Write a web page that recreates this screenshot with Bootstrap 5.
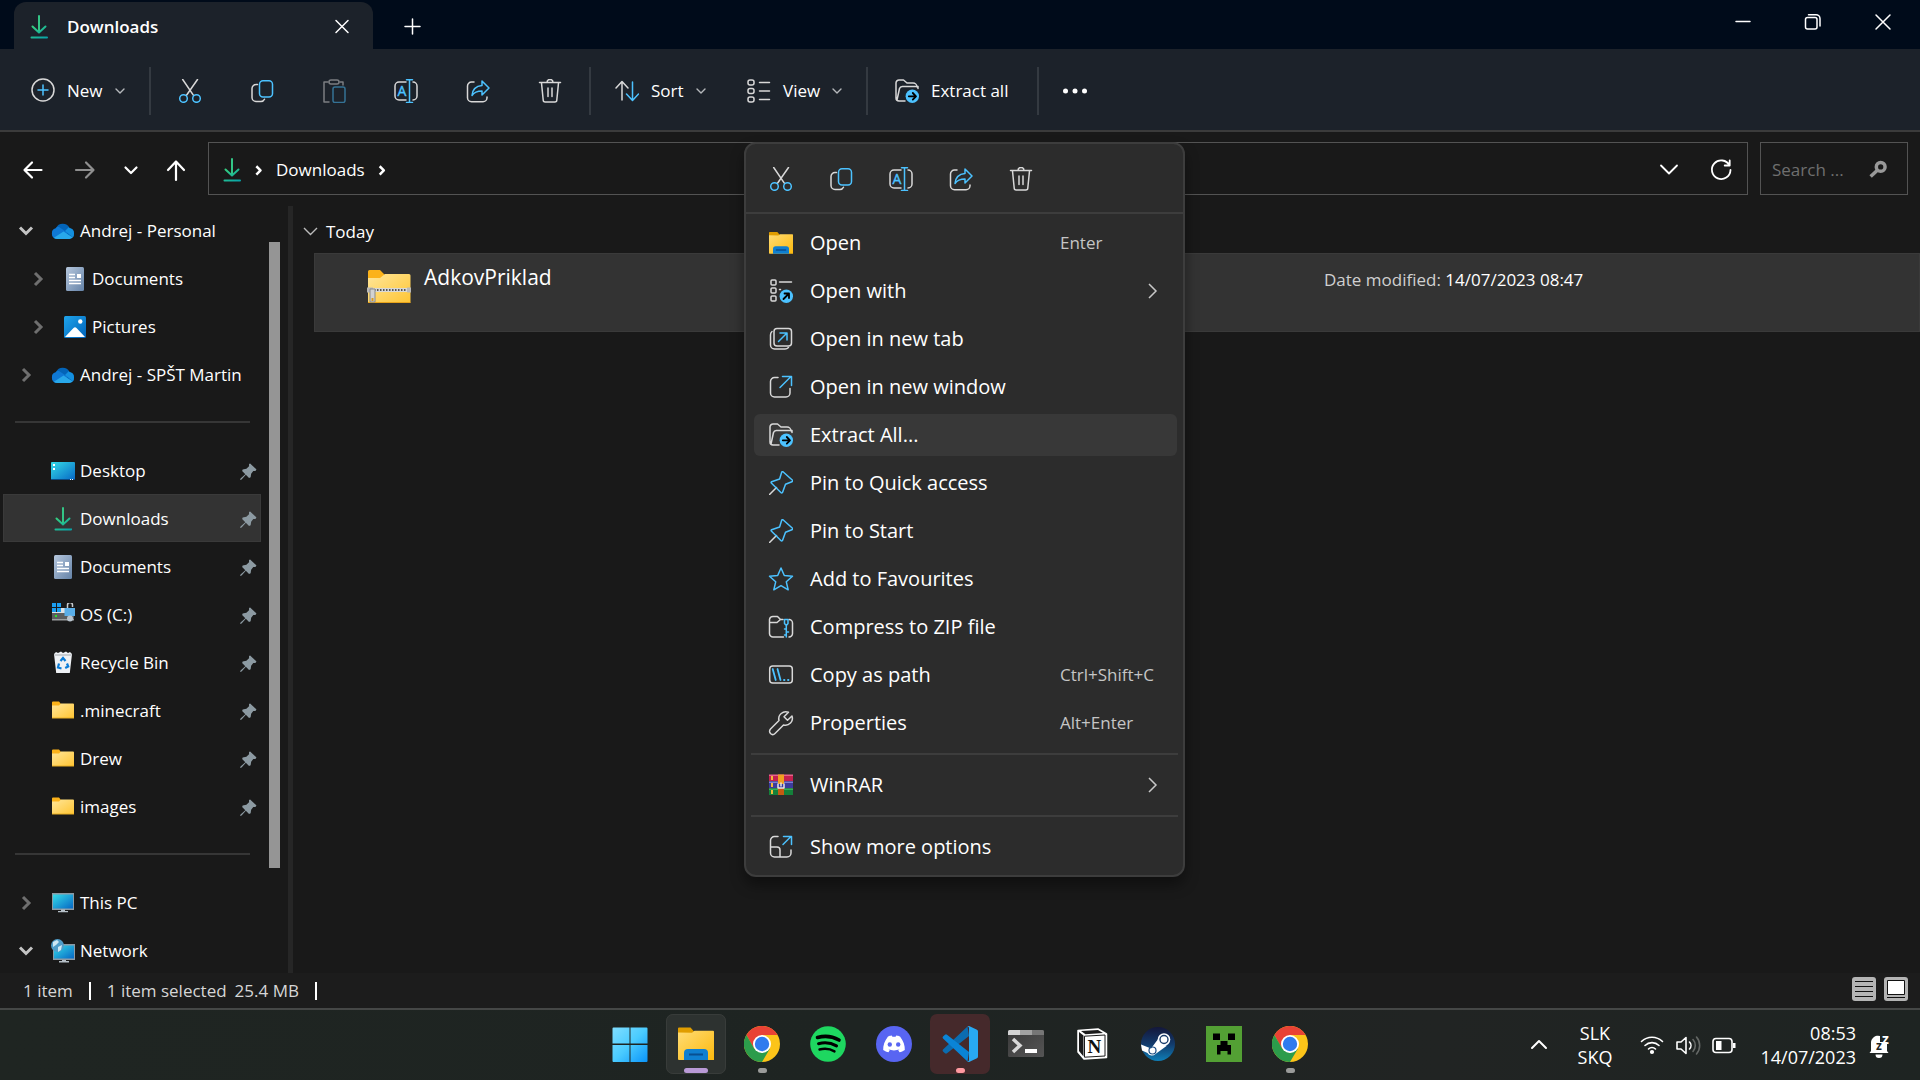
<!DOCTYPE html>
<html lang="en" data-bs-theme="dark">
<head>
<meta charset="utf-8">
<meta name="viewport" content="width=device-width, initial-scale=1">
<title>Downloads</title>
<link href="https://cdn.jsdelivr.net/npm/bootstrap@5.3.0/dist/css/bootstrap.min.css" rel="stylesheet">
<style>
:root{--acc:#4cc2ff;--ln:#d8d8d8}
body{font-family:"Open Sans","Noto Sans",sans-serif;font-size:17px;line-height:24px;background:#191919;color:#fff;overflow:hidden}
svg{flex:none;display:block;overflow:visible}
a{color:inherit;text-decoration:none}
.ic{width:24px;height:24px;fill:none;stroke:var(--ln);stroke-width:1.5;stroke-linecap:round;stroke-linejoin:round}
.bl{stroke:var(--acc)}
.plain{background:none;border:0;padding:0;color:inherit;display:flex;align-items:center}
.plain:hover{background:#ffffff10}
.titlebar{background:#000b1a;height:49px;padding-left:14px}
.tab-item{background:#1c222a;width:359px;margin-top:2px;border-radius:12px 12px 0 0;padding:2px 19px 0 13px;font-weight:600}
.tab-item .ic,.newtab .ic{stroke:#fff}
.newtab{width:48px;justify-content:center;margin-left:15px;padding-top:2px}
.winctl{padding-right:2px}
.winbtn{width:70px;height:43px;justify-content:center}
.winbtn .ic{stroke:#fff}
.toolbar{background:#1c222a;height:83px;border-bottom:2px solid #3b3b3b;padding-top:2px}
.toolbar .plain{height:60px}
.iconbtn{width:72px;justify-content:center}
.cmd{padding-left:24px!important;gap:12px}
.cmd-new{width:149px;padding-left:31px!important}
.cmd-sort{width:132px}.cmd-view{width:143px}.cmd-extract{width:166px}
.tsep{width:2px;height:48px;background:#343a41}
.tsep-after{margin-right:3px}
.tsep-before{margin-left:3px}
.chev{width:10px;height:10px;fill:none;stroke:#b5b8bb;stroke-width:1.4;stroke-linecap:round;stroke-linejoin:round}
.addressbar{height:74px;padding:10px 12px 11px 9px}
.navbtn{width:48px;justify-content:center;padding-top:2px}
.navbtn .ic{stroke:#fff;stroke-width:2.2}
.navbtn .ic.thin{stroke-width:1.8}
.navbtn:disabled .ic{stroke:#8f8f8f}
.navbtn-narrow{width:43px}
.addrbox{border:1px solid #535353;margin-left:8px;margin-right:12px;padding:0 2px 0 11px}
.addrbox>svg,.addrbox>a{margin-top:2px}
.crumb{width:20px;stroke:#fff;stroke-width:3;stroke-linecap:butt}
.searchbox{border:1px solid #535353;width:148px;padding:2px 18px 0 11px}
.searchbox input{background:none;border:0;outline:0;width:90px;color:#fff;padding:0}
.searchbox input::placeholder{color:#6f6f6f;opacity:1}
.side{width:294px}
.tree{width:261px;padding-left:3px}
.tree a{height:48px;display:flex;align-items:center;padding:2px 0 0 12px;white-space:nowrap}
.tree a.sel{background:#333;outline:1px solid #3a3a3a;outline-offset:-1px}
.tree a:hover{background:#2a2a2a}
.tree .tw{width:22px;height:22px;fill:none;stroke:#6f6f6f;stroke-width:3;margin-right:14px}
.tree .tw.open{stroke:#c4c4c4}
.tree a.child{padding-left:24px}
.tree .pic{width:24px;height:24px;margin-right:5px}
.tree .pin{width:17px;height:17px;margin-left:auto;margin-right:4px}
.tree .rule{height:48px;padding:0 11px 0 12px;display:flex;align-items:center}
.tree .rule hr{width:100%;margin:0;border-top:2px solid #363636;opacity:1}
.sbar{width:11px;height:626px;margin:36px 0 0 8px;background:#959595}
.divider{width:5px;margin-left:8px;background:#262626}
.files{min-width:0}
.group{padding:14px 0 0 10px;height:47px}
.filerow{background:#333;outline:1px solid #3a3a3a;outline-offset:-1px;height:79px;margin-left:20px;padding-left:53px}
.fname{font-size:21px;line-height:28px;padding-top:10px;width:913px;padding-left:13px}
.fdate{padding-top:15px;color:#d0d0d0}
.fdate b{font-weight:400;color:#fff}
.statusbar{background:#1c1c1c;height:37px;border-bottom:2px solid #454746;padding:0 12px 0 23px;color:#d6d6d6}
.vbar{width:2px;height:18px;background:#fff;margin:0 16px}
.taskbar{height:70px;background:linear-gradient(90deg,#1f2522,#1e2422 45%,#212423 75%,#1e2422);display:grid;grid-template-columns:1fr auto 1fr}
.app{width:60px;height:60px;margin:4px 3px 6px;border-radius:7px;justify-content:center;position:relative}
.app svg{width:36px;height:36px}
.app.act{background:#2d3230;outline:1px solid #383c3a;outline-offset:-1px}
.app.alert-red{background:#45292b}
.app .dot{position:absolute;bottom:1px;height:5px;width:9px;border-radius:3px;background:#9a9b9a}
.app.act .dot{width:24px;background:#b99ad6}
.app.alert-red .dot{background:#ff99a0}
.tray{font-size:18px;line-height:24px;padding-right:29px}
.tray .ic{stroke:#fff;stroke-width:2}
.tray .ic.wide{width:28px;stroke-width:1.6}
.lang{margin:0 26px 0 27px}
.clock{margin-left:22px;margin-right:11px}
.ctx{position:absolute;left:744px;top:142px;width:441px;background:#2c2c2c;border:2px solid #3d3d3d;border-radius:12px;box-shadow:0 8px 14px #0006;z-index:10;font-size:20px;padding-bottom:4px}
.ctx-top{height:70px;border-bottom:2px solid #3d3d3d;padding-left:5px;margin-bottom:5px}
.ctx-top .plain{width:60px;justify-content:center;padding-top:2px}
.ctx-item{height:42px;margin:3px 6px 3px 8px;border-radius:6px;padding-left:15px!important;text-align:left}
.ctx-item.hov{background:#383838}
.ctx-item .ic{margin-right:17px}
.ctx-item .lbl{width:250px}
.ctx-item kbd{background:none;padding:0;color:#c5c5c5;font-family:inherit;font-size:17px}
.ctx-sep{margin:6px 5px;border-top:2px solid #3d3d3d;opacity:1}
.ctx-item .more{width:14px;height:16px;margin-left:auto;margin-right:18px;fill:none;stroke:#c8c8c8;stroke-width:1.5}
</style>
<script src="https://cdn.jsdelivr.net/npm/bootstrap@5.3.0/dist/js/bootstrap.bundle.min.js"></script>
</head>
<body class="vh-100 d-flex flex-column">
<svg width="0" height="0" class="position-absolute" aria-hidden="true">
<defs>
<linearGradient id="gdl" x1="0" y1="0" x2="1" y2="1"><stop offset="0" stop-color="#36d080"/><stop offset="1" stop-color="#08a3a8"/></linearGradient>
<linearGradient id="gfo" x1="0" y1="0" x2="1" y2="1"><stop offset="0" stop-color="#ffe69a"/><stop offset="1" stop-color="#ffc533"/></linearGradient>
<linearGradient id="gex" x1="0" y1="0" x2="1" y2="1"><stop offset="0" stop-color="#ffdc75"/><stop offset="1" stop-color="#fcb90d"/></linearGradient>
<linearGradient id="gsc" x1="0" y1="0" x2="1" y2="1"><stop offset="0" stop-color="#35dbe8"/><stop offset="1" stop-color="#0667c4"/></linearGradient>
<linearGradient id="gdo" x1="0" y1="0" x2="1" y2="1"><stop offset="0" stop-color="#b6c7dd"/><stop offset="1" stop-color="#6583a8"/></linearGradient>
<linearGradient id="gpi" x1="0" y1="0" x2="1" y2="1"><stop offset="0" stop-color="#1fa5ec"/><stop offset="1" stop-color="#0062b8"/></linearGradient>
<linearGradient id="gwi" x1="0" y1="0" x2="1" y2="1"><stop offset="0" stop-color="#80deff"/><stop offset=".5" stop-color="#4acbff"/><stop offset="1" stop-color="#0a94fa"/></linearGradient>
<linearGradient id="gst" x1="0" y1="0" x2="0" y2="1"><stop offset="0" stop-color="#14173a"/><stop offset=".5" stop-color="#123a6b"/><stop offset="1" stop-color="#0f7fb8"/></linearGradient>
<linearGradient id="gte" x1="0" y1="0" x2="1" y2="1"><stop offset="0" stop-color="#3a3a3a"/><stop offset="1" stop-color="#555"/></linearGradient>
<clipPath id="ccl"><path d="M6 20a5.500 5.500 0 0 1-1-10.800A7.500 7.500 0 0 1 18.500 9 5.600 5.600 0 0 1 18.500 20z"/></clipPath>
<symbol id="download" viewBox="0 0 24 24"><g fill="none" stroke-width="2" stroke-linecap="round"><path stroke="#33c586" d="M12 1v16"/><path stroke="url(#gdl)" d="M5.500 11.500l6.500 6 6.500-6M4.500 22.500h15.500v.1"/></g></symbol>
<symbol id="cut" viewBox="0 0 24 24"><path d="M4.700.5l10.800 15.800M19.500.5L8.500 16.300"/><g class="bl"><circle cx="5.500" cy="19.500" r="3.800"/><circle cx="18.500" cy="19.500" r="3.800"/></g></symbol>
<symbol id="copy" viewBox="0 0 24 24"><path d="M7.500 5.500H6a4 4 0 0 0-4 4V18.500a4 4 0 0 0 4 4h5a4 4 0 0 0 3.500-2.300"/><rect class="bl" x="9.500" y="1.700" width="13" height="16.300" rx="3.500"/></symbol>
<symbol id="paste" viewBox="0 0 24 24"><path d="M6 3H2v20h5M18 3h3v3"/><rect x="7" y="1" width="10" height="4" rx="2"/><rect class="bl" x="11" y="8" width="12" height="15.500" rx="2"/></symbol>
<symbol id="rename" viewBox="0 0 24 24"><path d="M12 3H5a4 4 0 0 0-4 4v10a4 4 0 0 0 4 4h7M19 3a4 4 0 0 1 4 4v10a4 4 0 0 1-4 4"/><path class="bl" d="M12.500.8h6M12.500 23.500h6M15.500.8v22.700"/><text x="3.500" y="17" font-size="14" style="fill:#4cc2ff;stroke:#4cc2ff;stroke-width:.4;font-family:Open Sans">A</text></symbol>
<symbol id="share" viewBox="0 0 24 24"><path d="M8 3H5.500a4 4 0 0 0-4 4V18.700a4 4 0 0 0 4 4h11.500a4 4 0 0 0 4-4V18"/><path class="bl" d="M16 2l7 7-7 7v-4c-5 0-8 1.500-10 4.500.5-6 4-9.500 10-10z"/></symbol>
<symbol id="trash" viewBox="0 0 24 24"><path d="M1.500 3.500h21M9 3.500a3 3 0 0 1 6 0M3.500 4l1.700 17a2 2 0 0 0 2 2h9.600a2 2 0 0 0 2-2L20.500 4M10 9v8.500M14 9v8.500"/></symbol>
<symbol id="sort" viewBox="0 0 24 24"><path d="M7 21V3M1 9l6-6.500L13 9"/><path class="bl" d="M17.500 3v18M11.500 15l6 6.500 6-6.500"/></symbol>
<symbol id="view" viewBox="0 0 24 24"><rect x="1" y="1" width="6" height="5" rx="2"/><rect x="1" y="9.500" width="6" height="5" rx="2"/><rect x="1" y="18" width="6" height="5" rx="2"/><path d="M12.500 3.500h10M12.500 12h10M12.500 20.500h10"/></symbol>
<symbol id="extract" viewBox="0 0 24 24"><path d="M10 22H4a3 3 0 0 1-3-3V4a3 3 0 0 1 3-3h4.500l3.500 3h6a4 4 0 0 1 4 4M2 21L4.500 9.500A3 3 0 0 1 7.500 7.500H23v2"/><circle cx="17.300" cy="17.300" r="6.700" style="fill:#4cc2ff;stroke:none"/><path style="stroke:#000;stroke-width:1.800" d="M13.800 17.300h7M17.800 14l3.200 3.300-3.200 3.300"/></symbol>
<symbol id="cdown" viewBox="0 0 10 10"><path d="M1 3l4 4 4-4"/></symbol>
<symbol id="tdown" viewBox="0 0 22 22"><path d="M5 7.500l6 6 6-6"/></symbol>
<symbol id="tright" viewBox="0 0 22 22"><path d="M8 5l6 6-6 6"/></symbol>
<symbol id="more" viewBox="0 0 14 16"><path d="M4 1l7 7-7 7"/></symbol>
<symbol id="explorer" viewBox="0 0 36 36"><path fill="#e09d00" d="M0 2.500a1 1 0 0 1 1-1h11.500l3.500 4V8H0z"/><path fill="url(#gex)" d="M0 6.500l14 .2 2.500-2H35a1 1 0 0 1 1 1V34H1a1 1 0 0 1-1-1z"/><path fill="#0f7fd0" d="M6 34V27a4 4 0 0 1 4-4h16a4 4 0 0 1 4 4v7z"/><path stroke="#084f91" stroke-width="2" d="M11 28.500h14"/></symbol>
<symbol id="cloud" viewBox="0 0 24 24"><g clip-path="url(#ccl)"><path fill="#0364b8" d="M0 0h24v24H0z"/><path fill="#0f78d4" d="M0 8h8l9 6-12 8H0z"/><path fill="#1490df" d="M14 12l4-4h7v13z"/><path fill="#28a8ea" d="M1 20l11.500-7.500L24 20z"/></g></symbol>
<symbol id="doc" viewBox="0 0 24 24"><rect x="3" y="0" width="18" height="24" rx="1.500" fill="url(#gdo)"/><path stroke="#fff" stroke-width="1.300" d="M6 7.500h6M6 10.500h6M6 13.500h12M6 16.500h12"/><path fill="#fff" d="M14 7h4v4h-4z"/></symbol>
<symbol id="picture" viewBox="0 0 24 24"><rect x="1" y="1" width="22" height="22" rx="1.500" fill="url(#gpi)"/><path fill="#fff" d="M2 22l8.500-9a2 2 0 0 1 3 0L22 22z"/><circle cx="17.300" cy="6.500" r="2.200" fill="#fff"/></symbol>
<symbol id="desktop" viewBox="0 0 24 24"><rect y="3" width="24" height="18" rx="1" fill="url(#gsc)"/><path fill="#fff" d="M2 5h2v2H2zM2 9h2v2H2z"/><path fill="#0b4a83" d="M0 20h24v1H0z"/><path fill="#fff" d="M19 20h1v1h-1zM21 20h1v1h-1z"/></symbol>
<symbol id="drive" viewBox="0 0 24 24"><path fill="#1a9df0" d="M1 0h4v4H1zM6 0h4v4H6zM1 5h4v4H1zM6 5h4v4H6z"/><path fill="#dfe2e4" d="M10 5h12v5H1V9h9z"/><path fill="#5b5e60" d="M1 10h22v7H1z"/><path fill="#9a9d9f" d="M1 16h22v1.500H1z"/><path fill="#2be02b" d="M4 12h2v2H4z"/><path fill="none" stroke="#c8ccd0" stroke-width="1.500" d="M16.500 5V2a2.500 2.500 0 0 1 5 0v2"/><path fill="#5aaee8" d="M13.500 5H24v8H13.500z"/><circle cx="19" cy="15.500" r="3" fill="#b9c4ce"/></symbol>
<symbol id="bin" viewBox="0 0 24 24"><path fill="#eef1f4" d="M3 3l2-2 2 1 3-1.500L12 2l3-1.500L17 2l2-1 2 2-2.200 19H5.200z"/><path fill="#c8ccd0" d="M3 3h18l-.2 2H3.200z"/><path fill="none" stroke="#0a7bd6" stroke-width="2.200" d="M9.500 10l2.500-3 2.500 3M16 12.500l1.200 3-3 1.500M10.500 17.500L7 16.500l1-4"/></symbol>
<symbol id="folder" viewBox="0 0 24 24"><path fill="#fbb21a" d="M1 3.500a1 1 0 0 1 1-1h6l2 2.500v3H1z"/><path fill="url(#gfo)" d="M1 6.500h7l2-2h12a1 1 0 0 1 1 1V19H1z"/><path fill="#e9ae23" d="M1 18.500h22v1H1z"/></symbol>
<symbol id="pc" viewBox="0 0 24 24"><path fill="#8b9aa5" d="M1 2h22v17H1z"/><path fill="url(#gsc)" d="M2 3.500h20V17.500H2z"/><path fill="#b5bfc7" d="M10 18.500h4v1.500h3v1.200H7V20h3z"/></symbol>
<symbol id="network" viewBox="0 0 24 24"><path fill="#8b9aa5" d="M2 5h22v16H2z"/><path fill="url(#gsc)" d="M3 6.500h20v13H3z"/><path fill="#b5bfc7" d="M11 21h4v1h3v1.500H8V22h3z"/><circle cx="6.500" cy="6.500" r="6.500" fill="#4f9dc9"/><path fill="#cfe8f4" d="M2 3l4-2 2 2-3 3-3 2zM7 8l4-2-1 5-3 2z"/></symbol>
<symbol id="pin" viewBox="0 0 16 16"><path fill="#8c9aa2" d="M9.500.5l6 5.500-1 1.500h-2L10.500 10l-.5 3.500-1.500.5-3-3L1.500 15.500 0 16l.5-1.500L5 10.500 2 7.500 2.500 6l3.500-.5L8.500 3V1z"/></symbol>
<symbol id="pinline" viewBox="0 0 24 24"><path d="M.5 23.500l7-7"/><path class="bl" d="M14 .8l9.500 8.500c.3.300 0 1.200-.6 1.400l-6.400 2.600-3 8.200c-.3.600-1 .7-1.400.3L2.300 12c-.4-.4-.2-1 .3-1.300l8-2.700 2-6.500c.2-.7.800-1.100 1.400-.7z"/></symbol>
<symbol id="chrome" viewBox="0 0 36 36"><circle cx="18" cy="18" r="18" fill="#fcc419"/><path fill="#e94235" d="M2.400 9A18 18 0 0 1 33.600 9H18L10 22.500z"/><path fill="#2c9c4b" d="M2.400 9a18 18 0 0 0 15.600 27l8-13.500L18 27 10.200 22.500z"/><circle cx="18" cy="18" r="9" fill="#fff"/><circle cx="18" cy="18" r="7.200" fill="#2f7bee"/></symbol>
</defs>
</svg>

<header class="titlebar d-flex flex-shrink-0">
  <div class="tab-item d-flex align-items-center">
    <svg class="ic"><use href="#download"/></svg>
    <span class="ms-3">Downloads</span>
    <button class="plain ms-auto" aria-label="Close tab"><svg class="ic" viewBox="0 0 24 24"><path d="M6 5.500l12 12M18 5.500l-12 12"/></svg></button>
  </div>
  <button class="plain newtab" aria-label="New tab"><svg class="ic" viewBox="0 0 24 24"><path d="M5 12.500h15M12.500 5v15"/></svg></button>
  <div class="winctl d-flex ms-auto">
    <button class="plain winbtn" aria-label="Minimise"><svg class="ic" viewBox="0 0 24 24" stroke-linecap="butt"><path d="M5 11.500h14"/></svg></button>
    <button class="plain winbtn" aria-label="Restore"><svg class="ic" viewBox="0 0 24 24"><rect x="4.500" y="7.500" width="11.500" height="11.500" rx="2"/><path d="M7.500 4.700h7.500a4 4 0 0 1 4 4V16"/></svg></button>
    <button class="plain winbtn" aria-label="Close"><svg class="ic" viewBox="0 0 24 24"><path d="M5 5l14 14M19 5l-14 14"/></svg></button>
  </div>
</header>

<div class="toolbar d-flex align-items-center flex-shrink-0" role="toolbar">
  <button class="plain cmd cmd-new"><svg class="ic" viewBox="0 0 24 24"><circle cx="12" cy="11" r="11"/><path class="bl" d="M7 11h10M12 6v10"/></svg>New<svg class="chev"><use href="#cdown"/></svg></button>
  <div class="tsep tsep-after"></div>
  <button class="plain iconbtn" aria-label="Cut"><svg class="ic"><use href="#cut"/></svg></button>
  <button class="plain iconbtn" aria-label="Copy"><svg class="ic"><use href="#copy"/></svg></button>
  <button class="plain iconbtn" aria-label="Paste" disabled><svg class="ic opacity-50"><use href="#paste"/></svg></button>
  <button class="plain iconbtn" aria-label="Rename"><svg class="ic"><use href="#rename"/></svg></button>
  <button class="plain iconbtn" aria-label="Share"><svg class="ic"><use href="#share"/></svg></button>
  <button class="plain iconbtn" aria-label="Delete"><svg class="ic"><use href="#trash"/></svg></button>
  <div class="tsep tsep-before"></div>
  <button class="plain cmd cmd-sort"><svg class="ic"><use href="#sort"/></svg>Sort<svg class="chev"><use href="#cdown"/></svg></button>
  <button class="plain cmd cmd-view"><svg class="ic"><use href="#view"/></svg>View<svg class="chev"><use href="#cdown"/></svg></button>
  <div class="tsep tsep-after"></div>
  <button class="plain cmd cmd-extract"><svg class="ic"><use href="#extract"/></svg>Extract all</button>
  <div class="tsep"></div>
  <button class="plain iconbtn" aria-label="See more"><svg class="ic" viewBox="0 0 24 24" style="fill:#fff;stroke:none"><circle cx="2.500" cy="12" r="2.500"/><circle cx="12" cy="12" r="2.500"/><circle cx="21.500" cy="12" r="2.500"/></svg></button>
</div>

<div class="addressbar d-flex align-items-stretch flex-shrink-0">
  <button class="plain navbtn" aria-label="Back"><svg class="ic" viewBox="0 0 24 24"><path d="M20.500 12H4M11 4.500L3.500 12l7.500 7.500"/></svg></button>
  <button class="plain navbtn ms-1" aria-label="Forward" disabled><svg class="ic" viewBox="0 0 24 24"><path d="M3 12h17M13 4.500l7.500 7.500-7.500 7.500"/></svg></button>
  <button class="plain navbtn navbtn-narrow" aria-label="Recent"><svg class="ic" viewBox="0 0 24 24"><path d="M6.500 9.500l5.500 5.500 5.500-5.500"/></svg></button>
  <button class="plain navbtn" aria-label="Up"><svg class="ic" viewBox="0 0 24 24"><path d="M12 22V3.500M4 12l8-8.500 8 8.500"/></svg></button>
  <nav class="addrbox d-flex align-items-center flex-grow-1" aria-label="Address">
    <svg class="ic"><use href="#download"/></svg>
    <svg class="ic crumb ms-1" viewBox="0 0 24 24"><path d="M10 7.500l5 5-5 5"/></svg>
    <a href="#" class="ms-2">Downloads</a>
    <svg class="ic crumb ms-2" viewBox="0 0 24 24"><path d="M8 7.500l5 5-5 5"/></svg>
    <button class="plain navbtn ms-auto" aria-label="Previous locations"><svg class="ic thin" viewBox="0 0 24 24"><path d="M4 7.500l8 8 8-8"/></svg></button>
    <button class="plain navbtn ms-1" aria-label="Refresh"><svg class="ic thin" viewBox="0 0 24 24"><path d="M20.500 7.500A9.300 9.300 0 1 0 21.500 12M20.700 2.500V7.500h-5"/></svg></button>
  </nav>
  <form class="searchbox d-flex align-items-center justify-content-between"><input type="text" placeholder="Search ..." aria-label="Search Downloads"><svg width="21" height="21" viewBox="0 0 24 24" fill="none" stroke="#999" stroke-width="4"><circle cx="14.500" cy="9" r="5"/><path d="M11 12.500L3 20"/></svg></form>
</div>

<main class="d-flex flex-grow-1 overflow-hidden">
  <aside class="side d-flex flex-shrink-0">
    <nav class="tree" aria-label="Folders">
      <a href="#"><svg class="tw open"><use href="#tdown"/></svg><svg class="pic"><use href="#cloud"/></svg>Andrej - Personal</a>
      <a href="#" class="child"><svg class="tw"><use href="#tright"/></svg><svg class="pic"><use href="#doc"/></svg>Documents</a>
      <a href="#" class="child"><svg class="tw"><use href="#tright"/></svg><svg class="pic"><use href="#picture"/></svg>Pictures</a>
      <a href="#"><svg class="tw"><use href="#tright"/></svg><svg class="pic"><use href="#cloud"/></svg>Andrej - SPŠT Martin</a>
      <div class="rule"><hr></div>
      <a href="#"><span class="tw"></span><svg class="pic"><use href="#desktop"/></svg>Desktop<svg class="pin"><use href="#pin"/></svg></a>
      <a href="#" class="sel"><span class="tw"></span><svg class="pic"><use href="#download"/></svg>Downloads<svg class="pin"><use href="#pin"/></svg></a>
      <a href="#"><span class="tw"></span><svg class="pic"><use href="#doc"/></svg>Documents<svg class="pin"><use href="#pin"/></svg></a>
      <a href="#"><span class="tw"></span><svg class="pic"><use href="#drive"/></svg>OS (C:)<svg class="pin"><use href="#pin"/></svg></a>
      <a href="#"><span class="tw"></span><svg class="pic"><use href="#bin"/></svg>Recycle Bin<svg class="pin"><use href="#pin"/></svg></a>
      <a href="#"><span class="tw"></span><svg class="pic"><use href="#folder"/></svg>.minecraft<svg class="pin"><use href="#pin"/></svg></a>
      <a href="#"><span class="tw"></span><svg class="pic"><use href="#folder"/></svg>Drew<svg class="pin"><use href="#pin"/></svg></a>
      <a href="#"><span class="tw"></span><svg class="pic"><use href="#folder"/></svg>images<svg class="pin"><use href="#pin"/></svg></a>
      <div class="rule"><hr></div>
      <a href="#"><svg class="tw"><use href="#tright"/></svg><svg class="pic"><use href="#pc"/></svg>This PC</a>
      <a href="#"><svg class="tw open"><use href="#tdown"/></svg><svg class="pic"><use href="#network"/></svg>Network</a>
    </nav>
    <div class="sbar"></div>
    <div class="divider"></div>
  </aside>
  <section class="files flex-grow-1">
    <div class="group d-flex"><svg width="14" height="24" viewBox="0 0 14 24" fill="none" stroke="#bbb" stroke-width="1.400" class="me-2"><path d="M0 8l6.500 6.500L13 8"/></svg>Today</div>
    <div class="filerow d-flex">
      <svg width="44" height="38" viewBox="0 0 44 38" class="mt-3"><path fill="#fbb21a" d="M1 2.500a1.500 1.500 0 0 1 1.500-1.500H13l5 5v6H1z"/><path fill="url(#gfo)" d="M1 9h12l5-4h24a1.500 1.500 0 0 1 1.500 1.500V33a1 1 0 0 1-1 1H2a1 1 0 0 1-1-1z"/><path fill="#e9a41a" d="M1 33h42.500v1H1z"/><path fill="#b9b9b9" d="M0 18.500h6v5H0zM40 18.500h4v5h-4z"/><path fill="#d8d8d8" d="M6 19h34v4H6z"/><path stroke="#555" stroke-width="2" stroke-dasharray="1.500 1.500" d="M7 21h33"/><path fill="#d2d2d2" stroke="#8a8a8a" d="M3 20h5v13H3z"/><path fill="#d99a1e" d="M4.500 29h2v3h-2z"/></svg>
      <div class="fname">AdkovPriklad</div>
      <div class="fdate">Date modified: <b>14/07/2023 08:47</b></div>
    </div>
  </section>
</main>

<div class="statusbar d-flex align-items-center flex-shrink-0">
  <span>1 item</span><span class="vbar"></span><span>1 item selected</span><span class="ms-2">25.4 MB</span><span class="vbar"></span>
  <button class="plain ms-auto mb-1" aria-label="Details view"><svg width="24" height="24"><rect width="24" height="24" rx="3" fill="#b4b4b4"/><path stroke="#111" d="M3 4.500h18M3 9.500h18M3 14.500h18M3 19.500h18"/></svg></button>
  <button class="plain ms-2 mb-1" aria-label="Large icons view"><svg width="24" height="24"><rect width="24" height="24" rx="3" fill="#b4b4b4"/><path stroke="#111" fill="#fff" d="M3.500 3.500h17v14h-17z"/><path stroke="#111" d="M3 20.500h18"/></svg></button>
</div>

<footer class="taskbar flex-shrink-0">
  <div></div>
  <nav class="d-flex" aria-label="Taskbar">
    <button class="plain app" aria-label="Start"><svg viewBox="0 0 36 36" fill="url(#gwi)"><path d="M.5 2.500a1 1 0 0 1 1-1H17.500v16H.5zM18.500 1.500h16a1 1 0 0 1 1 1v15h-17zM.5 19h17v17H1.500a1 1 0 0 1-1-1zM18.500 19h17v16a1 1 0 0 1-1 1h-16z"/></svg></button>
    <button class="plain app act" aria-label="File Explorer"><svg><use href="#explorer"/></svg><span class="dot"></span></button>
    <button class="plain app" aria-label="Chrome"><svg><use href="#chrome"/></svg><span class="dot"></span></button>
    <button class="plain app" aria-label="Spotify"><svg viewBox="0 0 36 36"><circle cx="18" cy="18" r="17.800" fill="#1ed760"/><g fill="none" stroke="#000" stroke-linecap="round"><path stroke-width="3.600" d="M7.500 11.500c7-2 15-1.200 21.500 2.500"/><path stroke-width="3" d="M8.500 17.700c6.500-1.800 12.500-1 18 2.200"/><path stroke-width="2.400" d="M9.500 23.500c5.500-1.400 10.500-.8 15 1.900"/></g></svg></button>
    <button class="plain app" aria-label="Discord"><svg viewBox="0 0 36 36"><circle cx="18" cy="18" r="18" fill="#5865f2"/><path fill="#fff" d="M12 10.500c1-.5 2.500-.9 3.800-1l.6 1.300h3.200l.6-1.300c1.300.1 2.800.5 3.800 1 3.500 4.500 5 9 4.800 13.500-1.800 1.300-3.500 1.900-5.300 2.300l-1.300-2.200 1.500-.8c-3.500 1.500-7.900 1.500-11.400 0l1.500.8-1.300 2.200c-1.800-.4-3.500-1-5.300-2.300-.2-4.500 1.300-9 4.800-13.500z"/><circle cx="13.800" cy="18.500" r="2.200" fill="#5865f2"/><circle cx="22.200" cy="18.500" r="2.200" fill="#5865f2"/></svg></button>
    <button class="plain app alert-red" aria-label="Visual Studio Code"><svg viewBox="0 0 36 36"><path fill="#0b6cb0" d="M25.500.5L1 23.500a1.500 1.500 0 0 0 0 2l2 1.800a1.500 1.500 0 0 0 2 0L27 10z"/><path fill="#0a84d6" d="M25.500 35.500L1 12.500a1.500 1.500 0 0 1 0-2l2-1.800a1.500 1.500 0 0 1 2 0L27 26z"/><path fill="#28a9f2" d="M27 0l7.500 3.600a2 2 0 0 1 1.500 2v24.800a2 2 0 0 1-1.500 2L27 36c-.8.300-1.500 0-2-.6 1 .4 2-.2 2-1.400V2c0-1.200-1-1.800-2-1.400.5-.6 1.200-.9 2-.6z"/></svg><span class="dot"></span></button>
    <button class="plain app" aria-label="Terminal"><svg viewBox="0 0 36 36"><rect y="4" width="36" height="27" rx="1.500" fill="url(#gte)"/><path fill="#d4d4d4" d="M0 5.500A1.500 1.500 0 0 1 1.500 4H12v5H0z"/><path fill="#a2a2a2" d="M12 4h12v5H12z"/><path fill="#767676" d="M24 4h10.500A1.500 1.500 0 0 1 36 5.500V9H24z"/><path fill="none" stroke="#d8d8d8" stroke-width="3.500" d="M5 13l7 6.500L5 26"/><path fill="#fff" d="M17 23h12v4H17z"/></svg></button>
    <button class="plain app" aria-label="Notion"><svg viewBox="0 0 36 36"><path fill="#fff" stroke="#fff" stroke-width="1.500" stroke-linejoin="round" d="M4 4.500l20-1.500 8.500 5v23.500L10 33l-6-7z"/><path fill="#1b1b1b" d="M5 6l4.500 3.500v21L5 25zM7 5l17-1 5 3-17.500 1.200z"/><path fill="#fff" stroke="#1b1b1b" d="M10.500 10.200l20.500-1.200v21L10.500 31.200z"/><text x="13.500" y="26.500" font-family="Liberation Serif" font-weight="700" font-size="19" fill="#111">N</text></svg></button>
    <button class="plain app" aria-label="Steam"><svg viewBox="0 0 36 36"><circle cx="18" cy="18" r="17" fill="url(#gst)"/><path fill="#fff" d="M1 18.500L11 22.500l7.500-10 8 7.500-11 8a5 5 0 0 1-8-1L2 24.500z"/><circle cx="24" cy="13.500" r="6.300" fill="#fff"/><circle cx="24" cy="13.500" r="4" fill="#fff" stroke="#1b3d6c" stroke-width="1.400"/><circle cx="12.500" cy="24.500" r="3.500" fill="none" stroke="#1a4b80" stroke-width="1.200"/></svg></button>
    <button class="plain app" aria-label="Minecraft"><svg viewBox="0 0 36 36"><path fill="#53a034" d="M0 0h36v36H0z"/><path d="M7 7.500h7v6.500H7zM22 7.500h7v6.500h-7zM14.500 15h7v4h3.500v9.500h-3.500v-3.500h-7v3.500H11V19h3.500z"/></svg></button>
    <button class="plain app" aria-label="Chrome profile"><svg><use href="#chrome"/></svg><span class="dot"></span></button>
  </nav>
  <div class="tray d-flex align-items-center justify-content-end">
    <button class="plain" aria-label="Show hidden icons"><svg class="ic" viewBox="0 0 24 24"><path d="M5 15l7-7 7 7"/></svg></button>
    <div class="lang text-center">SLK<br>SKQ</div>
    <svg class="ic wide me-2" viewBox="0 0 24 24"><path d="M1.500 8.500a15 15 0 0 1 21 0M5 12.500a10 10 0 0 1 14 0M8.500 16a5 5 0 0 1 7 0"/><circle cx="12" cy="19" r="1.300" fill="#fff"/></svg>
    <svg class="ic wide me-2" viewBox="0 0 24 24"><path d="M1 9h4l5-4.500v16L5 16H1zM13.500 9a5 5 0 0 1 0 7"/><path stroke="#656866" d="M17 6.500a9 9 0 0 1 0 12M20.500 4a13 13 0 0 1 0 17"/></svg>
    <svg class="ic wide" viewBox="0 0 24 24"><rect x="1" y="5.500" width="19" height="14" rx="3"/><path fill="#fff" stroke="none" d="M4 8h5.500v9H4zM21 10h2.500v5H21z"/></svg>
    <div class="clock text-end">08:53<br>14/07/2023</div>
    <svg class="ic" viewBox="0 0 24 24" aria-label="Do not disturb"><path fill="#fff" stroke="none" d="M4 18V10a7 7 0 0 1 9-7v6h7v9l1.500 2h-19zM8.500 21.500h7a3.500 3.500 0 0 1-7 0z"/><text x="9" y="17" font-size="12" font-weight="700" style="fill:#1e2422;stroke:none">z</text><text x="15" y="11" font-size="14" font-weight="700" style="fill:#fff;stroke:none">z</text></svg>
  </div>
</footer>

<div class="ctx" role="menu">
  <div class="ctx-top d-flex">
    <button class="plain" aria-label="Cut"><svg class="ic"><use href="#cut"/></svg></button>
    <button class="plain" aria-label="Copy"><svg class="ic"><use href="#copy"/></svg></button>
    <button class="plain" aria-label="Rename"><svg class="ic"><use href="#rename"/></svg></button>
    <button class="plain" aria-label="Share"><svg class="ic"><use href="#share"/></svg></button>
    <button class="plain" aria-label="Delete"><svg class="ic"><use href="#trash"/></svg></button>
  </div>
  <div class="d-flex flex-column">
  <button class="plain ctx-item" role="menuitem"><svg class="ic" style="stroke:none"><use href="#explorer"/></svg><span class="lbl">Open</span><kbd>Enter</kbd></button>
  <button class="plain ctx-item" role="menuitem"><svg class="ic" viewBox="0 0 24 24"><rect x="2" y="1" width="5" height="5" rx="1"/><rect x="2" y="9" width="5" height="5" rx="1"/><rect x="2" y="17" width="5" height="5" rx="1"/><path d="M10.500 3h12M10.500 10.500h1"/><circle cx="17.300" cy="17.300" r="6.700" style="fill:#4cc2ff;stroke:none"/><path style="stroke:#000;stroke-width:1.800" d="M14.500 20l5.500-5.500M15.500 14.500h4.500v4.500"/></svg><span class="lbl">Open with</span><svg class="more"><use href="#more"/></svg></button>
  <button class="plain ctx-item" role="menuitem"><svg class="ic" viewBox="0 0 24 24"><rect x="5" y="1.500" width="17.500" height="17.500" rx="3"/><path d="M3 4.500c-1 .8-1.500 2-1.500 3.500V18a4 4 0 0 0 4 4H16c1.500 0 2.500-.5 3.500-1.500"/><path class="bl" d="M9.500 14.500l8-8M11 6h7v7"/></svg><span class="lbl">Open in new tab</span></button>
  <button class="plain ctx-item" role="menuitem"><svg class="ic" viewBox="0 0 24 24"><path d="M9 2.500H5.500a4 4 0 0 0-4 4V18a4 4 0 0 0 4 4H17a4 4 0 0 0 4-4v-4.500"/><path class="bl" d="M11 12.500L22 1.500M13.500 1.500H22.500v9"/></svg><span class="lbl">Open in new window</span></button>
  <button class="plain ctx-item hov" role="menuitem"><svg class="ic"><use href="#extract"/></svg><span class="lbl">Extract All...</span></button>
  <button class="plain ctx-item" role="menuitem"><svg class="ic"><use href="#pinline"/></svg><span class="lbl">Pin to Quick access</span></button>
  <button class="plain ctx-item" role="menuitem"><svg class="ic"><use href="#pinline"/></svg><span class="lbl">Pin to Start</span></button>
  <button class="plain ctx-item" role="menuitem"><svg class="ic bl" viewBox="0 0 24 24"><path d="M12 1l3.300 7.500 8.200.8-6.200 5.500 1.900 8L12 18.600l-7.200 4.200 1.900-8L.5 9.300l8.200-.8z"/></svg><span class="lbl">Add to Favourites</span></button>
  <button class="plain ctx-item" role="menuitem"><svg class="ic" viewBox="0 0 24 24"><path d="M14.500 22H4a3.500 3.500 0 0 1-3.500-3.500v-14A3.500 3.500 0 0 1 4 1.500h4.500l3 3H14M.5 7.500H8l3.500-3M20 4.500a3.500 3.500 0 0 1 3.500 3.500v10.500a3.500 3.500 0 0 1-3.500 3.500"/><path class="bl" d="M15.500 4.500h3.500v4l-1.700 2-1.800-2zM17.300 10.500v11.500M15.500 14h1.500M17.500 17h2M15.500 20h1.500"/></svg><span class="lbl">Compress to ZIP file</span></button>
  <button class="plain ctx-item" role="menuitem"><svg class="ic" viewBox="0 0 24 24"><rect x=".7" y="3" width="22.600" height="17" rx="3"/><path class="bl" d="M3.700 6l3 11M8.500 6l3 11M15 17h.5M19 17h.5" style="stroke-width:1.800"/></svg><span class="lbl">Copy as path</span><kbd>Ctrl+Shift+C</kbd></button>
  <button class="plain ctx-item" role="menuitem"><svg class="ic" viewBox="0 0 24 24"><path d="M19.500 1.300A7 7 0 0 0 10 9.500L1.500 18a3 3 0 0 0 4.500 4.500L14.500 14A7 7 0 0 0 23 5l-4.500 4.300-3.500-3.500z"/></svg><span class="lbl">Properties</span><kbd>Alt+Enter</kbd></button>
  <hr class="ctx-sep">
  <button class="plain ctx-item" role="menuitem"><svg class="ic" viewBox="0 0 24 24" style="stroke:none"><path fill="#c4204f" d="M0 2h24v6H0z"/><path fill="#e8618a" d="M0 1.500h24v1.500H0z"/><path fill="#3b3b9c" d="M0 8.500h24v6.500H0z"/><path fill="#7c7cd8" d="M0 8.500h24v1.500H0z"/><path fill="#14803a" d="M0 15.500h24V22H0z"/><path fill="#3dbb62" d="M0 15.500h24v1.300H0z"/><path fill="#f3b93a" d="M2 3h2v4H2zM2 10h2v4H2zM2 17h2v4H2z"/><path fill="#f0a020" d="M9 1.500h6V11H9z"/><path fill="#c55a12" d="M9 15h6v7H9z"/><path fill="none" stroke="#e6e6e6" stroke-width="1.500" d="M9 11v4h6v-4M12 10v3"/></svg><span class="lbl">WinRAR</span><svg class="more"><use href="#more"/></svg></button>
  <hr class="ctx-sep">
  <button class="plain ctx-item" role="menuitem"><svg class="ic" viewBox="0 0 24 24"><path d="M9 1.500H5.500a4 4 0 0 0-4 4V18a4 4 0 0 0 4 4H18a4 4 0 0 0 4-4v-3M1.500 12H8a3 3 0 0 1 3 3v7"/><path class="bl" d="M14 9.500l8-8M14.500 1.500H22.500v8"/></svg><span class="lbl">Show more options</span></button>
  </div>
</div>
</body>
</html>
